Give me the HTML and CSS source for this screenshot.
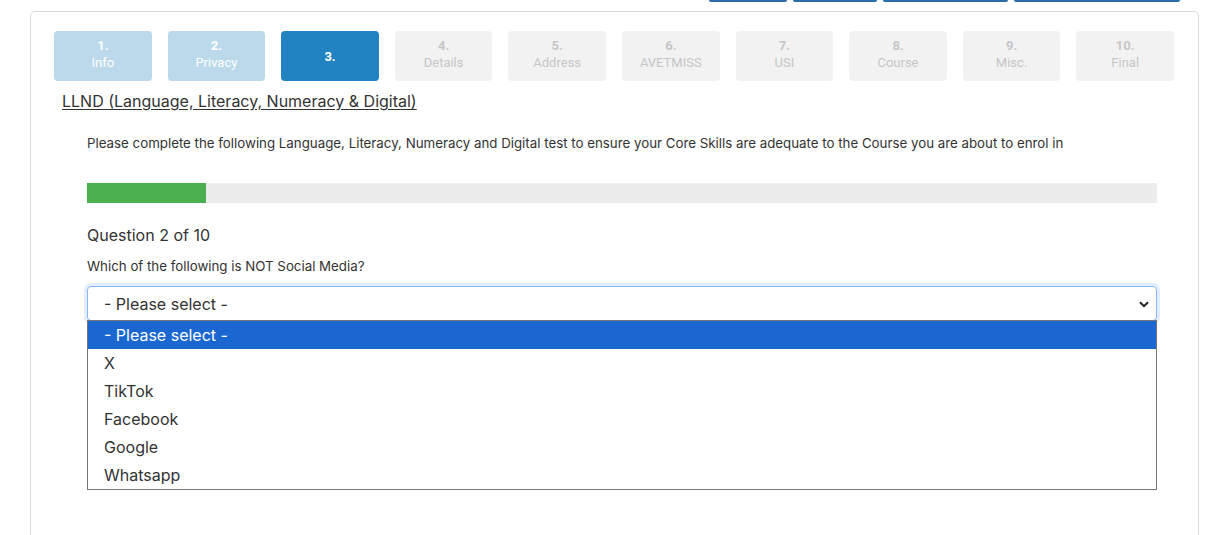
FILE: index.html
```html
<!DOCTYPE html>
<html lang="en">

<head>
    <meta charset="UTF-8">
    <meta name="viewport" content="width=device-width, initial-scale=1.0">
    <title>Enrolment - LLND</title>
    <link rel="stylesheet" href="styles.css">
</head>

<body>
    <div class="topbar">
        <span class="top-btn" style="width:78px"></span>
        <span class="top-btn" style="width:84px"></span>
        <span class="top-btn" style="width:125px"></span>
        <span class="top-btn" style="width:166px"></span>
    </div>

    <div class="card">
        <!-- enrolment steps -->
        <div class="steps">
            <div class="step done"><b>1.</b><span>Info</span></div>
            <div class="step done"><b>2.</b><span>Privacy</span></div>
            <div class="step active"><b>3.</b></div>
            <div class="step"><b>4.</b><span>Details</span></div>
            <div class="step"><b>5.</b><span>Address</span></div>
            <div class="step"><b>6.</b><span>AVETMISS</span></div>
            <div class="step"><b>7.</b><span>USI</span></div>
            <div class="step"><b>8.</b><span>Course</span></div>
            <div class="step"><b>9.</b><span>Misc.</span></div>
            <div class="step"><b>10.</b><span>Final</span></div>
        </div>

        <h2 class="section-title">LLND (Language, Literacy, Numeracy &amp; Digital)</h2>

        <div class="quiz">
            <p class="intro">Please complete the following Language, Literacy, Numeracy and Digital test to ensure your Core Skills are adequate to the Course you are about to enrol in</p>

            <div class="progress">
                <div class="progress-fill" style="width:11.1%"></div>
            </div>

            <h3 class="question-no">Question 2 of 10</h3>
            <p class="question">Which of the following is NOT Social Media?</p>

            <div class="select-wrap">
                <div class="select">
                    <span>- Please select -</span>
                    <svg width="10" height="7" viewBox="0 0 10 7">
                        <path d="M1 1.2 L5 5.2 L9 1.2" fill="none" stroke="#222" stroke-width="2"/>
                    </svg>
                </div>
                <ul class="options">
                    <li class="selected">- Please select -</li>
                    <li>X</li>
                    <li>TikTok</li>
                    <li>Facebook</li>
                    <li>Google</li>
                    <li>Whatsapp</li>
                </ul>
            </div>
        </div>
    </div>
</body>

</html>
```

FILE: styles.css
```css
body {
    margin: 0;
    font-family: Inter, "Liberation Sans", sans-serif;
    color: #333;
    background: #fff;
}

.topbar {
    height: 2px;
    display: flex;
    justify-content: flex-end;
    gap: 6px;
    padding-right: 50px;
    margin-bottom: 9px;
}

.top-btn {
    display: block;
    height: 2px;
    background-color: #2a6ca8;
    border-radius: 0 0 2px 2px;
}

.card {
    margin: 0 31px 0 30px;
    height: 560px;
    padding: 19px 24px 0 23px;
    border: 1px solid #dcdcdc;
    border-radius: 5px;
}

.steps {
    display: grid;
    grid-template-columns: repeat(10, 1fr);
    gap: 16px;
}

.step {
    height: 50px;
    box-sizing: border-box;
    padding-bottom: 5px;
    border-radius: 4px;
    background-color: #f2f2f2;
    color: #c6c6c6;
    font-family: Roboto, "Liberation Sans", sans-serif;
    font-size: 13px;
    line-height: 17px;
    display: flex;
    flex-direction: column;
    align-items: center;
    justify-content: center;
}

.step b {
    font-weight: bold;
}

.step.done {
    background-color: #bcd9ec;
    color: #fff;
}

.step.active {
    background-color: #2283c2;
    padding-bottom: 0;
    color: #fff;
}

.section-title {
    margin: 9px 0 0 8px;
    font-size: 16px;
    font-weight: normal;
    line-height: 22px;
    text-decoration: underline;
    text-underline-offset: 2px;
    color: #333;
}

.quiz {
    padding: 0 17px 0 33px;
}

.intro {
    margin: 21px 0 0;
    font-size: 13.3px;
    line-height: 20px;
}

.progress {
    margin-top: 30px;
    height: 20px;
    background-color: #ececec;
}

.progress-fill {
    height: 100%;
    background-color: #4caf50;
}

.question-no {
    margin: 22px 0 0;
    font-size: 16px;
    font-weight: normal;
    line-height: 20px;
}

.question {
    margin: 12px 0 0;
    font-size: 13.3px;
    line-height: 18px;
}

.select-wrap {
    position: relative;
    margin-top: 11px;
}

.select {
    height: 32px;
    border: 1px solid #86b7fe;
    border-radius: 4px;
    box-shadow: 0 0 0 3px rgba(13, 110, 253, 0.12);
    display: flex;
    align-items: center;
    justify-content: space-between;
    padding: 1px 7px 0 16px;
    font-size: 16px;
    color: #333;
}

.options {
    position: absolute;
    top: 34px;
    left: 0;
    right: 0;
    margin: 0;
    padding: 0;
    list-style: none;
    background: #fff;
    border: 1px solid #767676;
}

.options li {
    height: 28px;
    line-height: 29px;
    padding-left: 16px;
    font-size: 16px;
    color: #333;
}

.options li.selected {
    background-color: #1a67d2;
    color: #fff;
}
```
